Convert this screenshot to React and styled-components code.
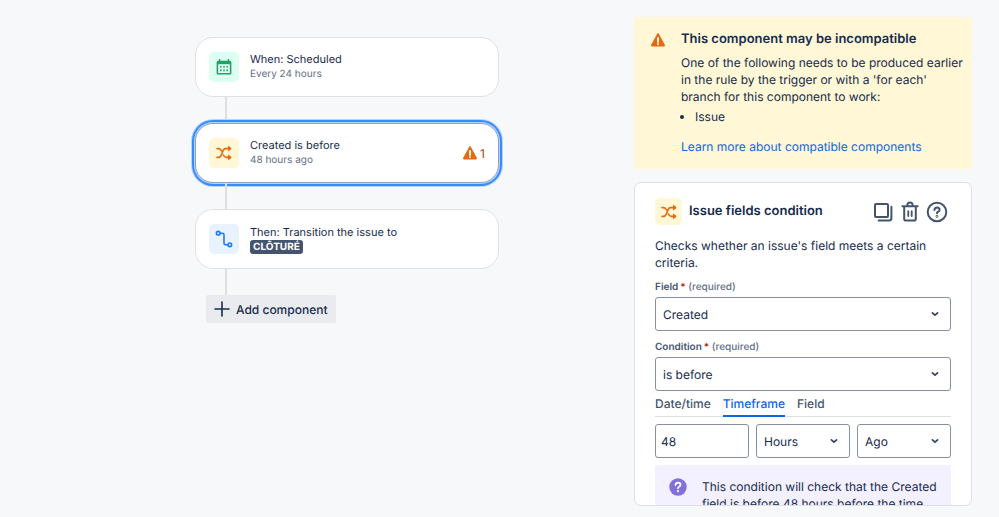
import { useState } from "react";
import styled, { createGlobalStyle, css } from "styled-components";

const GlobalStyle = createGlobalStyle`
  *, *::before, *::after {
    box-sizing: border-box;
  }

  body {
    margin: 0;
    background: #f7f8fa;
    color: #172b4d;
    font-family: Inter, "Liberation Sans", sans-serif;
    font-size: 12px;
    line-height: 17px;
    text-rendering: geometricPrecision;
  }

  button, input, select {
    font: inherit;
    color: inherit;
    text-rendering: inherit;
  }
`;

const CalendarIcon = () => (
  <svg width="18" height="18" viewBox="0 0 18 18" fill="none" aria-hidden="true">
    <rect x="1.6" y="2.8" width="14.8" height="13.8" rx="1.6" fill="#22a06b" />
    <path d="M4.6 1.8v3M13.4 1.8v3" stroke="#22a06b" strokeWidth="1.6" strokeLinecap="round" />
    <rect x="3.2" y="6.2" width="11.6" height="8.8" fill="#dcfff1" />
    <path
      d="M5 8.8h1.6M8.2 8.8h1.6M11.4 8.8h1.6M5 12.4h1.6M8.2 12.4h1.6M11.4 12.4h1.6"
      stroke="#22a06b"
      strokeWidth="1.6"
    />
  </svg>
);

const ShuffleIcon = () => (
  <svg
    width="18"
    height="18"
    viewBox="0 0 18 18"
    fill="none"
    stroke="#e56910"
    strokeWidth="1.6"
    strokeLinecap="round"
    strokeLinejoin="round"
    aria-hidden="true"
  >
    <path d="M2 4.6h1.6c1.8 0 2.4 1.2 3 2.4M2 13.4h1.6c4.4 0 2.6-8.8 7-8.8h4.6M8.4 11c.6 1.2 1.2 2.4 2.8 2.4h4" />
    <path d="M13.8 2.6l2.4 2-2.4 2zM13.8 11.4l2.4 2-2.4 2z" fill="#e56910" strokeWidth="1" />
  </svg>
);

const TransitionIcon = () => (
  <svg width="18" height="18" viewBox="0 0 18 18" fill="none" stroke="#1d7afc" strokeWidth="1.6" aria-hidden="true">
    <circle cx="3.2" cy="3.2" r="1.8" />
    <circle cx="14.8" cy="14.8" r="1.8" />
    <path d="M5 3.2h2.4Q9 3.2 9 4.8v8.4q0 1.6 1.6 1.6H13" />
  </svg>
);

const WarningIcon = () => (
  <svg width="16" height="16" viewBox="0 0 16 16" aria-hidden="true">
    <path d="M7.2 1.7q.8-1.2 1.6 0l6.1 11.4q.5 1.4-.9 1.4H2q-1.4 0-.9-1.4z" fill="#e56910" />
    <path d="M8 6v4" stroke="#fff" strokeWidth="1.8" strokeLinecap="round" />
    <circle cx="8" cy="12.3" r="1" fill="#fff" />
  </svg>
);

const PlusIcon = () => (
  <svg width="16" height="16" viewBox="0 0 16 16" fill="none" aria-hidden="true">
    <path d="M8 1v14M1 8h14" stroke="#172b4d" strokeWidth="1.6" strokeLinecap="round" />
  </svg>
);

const CopyIcon = () => (
  <svg width="20" height="20" viewBox="0 0 20 20" fill="none" stroke="#44546f" strokeWidth="2" aria-hidden="true">
    <rect x="2" y="2" width="13" height="13" rx="1" />
    <path d="M18.4 4.8v11.8q0 1.8-1.8 1.8H5.6" strokeLinecap="round" />
  </svg>
);

const TrashIcon = () => (
  <svg
    width="20"
    height="22"
    viewBox="0 0 20 22"
    fill="none"
    stroke="#44546f"
    strokeWidth="2"
    strokeLinecap="round"
    aria-hidden="true"
  >
    <path d="M2.4 5.2h15.2M7.4 4.6V4q0-2.6 2.6-2.6T12.6 4v.6" />
    <path d="M4.2 6.2v11.6q0 1.8 1.6 1.8h8.4q1.6 0 1.6-1.8V6.2" />
    <path d="M8.3 10.2v4.8M11.7 10.2v4.8" strokeWidth="1.8" />
  </svg>
);

const HelpIcon = () => (
  <svg
    width="22"
    height="22"
    viewBox="0 0 22 22"
    fill="none"
    stroke="#44546f"
    strokeWidth="2"
    strokeLinecap="round"
    aria-hidden="true"
  >
    <circle cx="11" cy="11" r="9.3" />
    <path d="M8.4 9q.2-2.6 2.6-2.6 2.6.1 2.6 2.3 0 1.4-1.5 2-1.1.5-1.1 1.6" />
    <circle cx="11" cy="15.4" r=".4" />
  </svg>
);

const HelpFilledIcon = () => (
  <svg width="18" height="18" viewBox="0 0 18 18" fill="none" strokeLinecap="round" aria-hidden="true">
    <circle cx="9" cy="9" r="8.7" fill="#8270db" />
    <path
      d="M6.5 7q.2-2.4 2.5-2.4 2.5.1 2.5 2.2 0 1.2-1.4 1.9-1.1.5-1.1 1.6"
      stroke="#fff"
      strokeWidth="1.8"
    />
    <circle cx="9" cy="13.2" r="1.1" fill="#fff" />
  </svg>
);

const ChevronIcon = () => (
  <svg width="8" height="6" viewBox="0 0 8 6" fill="none" aria-hidden="true">
    <path
      d="M1.4 1.8L4 4.2l2.6-2.4"
      stroke="#344563"
      strokeWidth="1.7"
      strokeLinecap="round"
      strokeLinejoin="round"
    />
  </svg>
);

const steps = [
  { id: "trigger", title: "When: Scheduled", detail: "Every 24 hours", tint: "#dcfff1", Icon: CalendarIcon },
  {
    id: "condition",
    title: "Created is before",
    detail: "48 hours ago",
    tint: "#fff7d6",
    Icon: ShuffleIcon,
    warnings: 1,
  },
  { id: "action", title: "Then: Transition the issue to", status: "CLÔTURÉ", tint: "#e9f2ff", Icon: TransitionIcon },
];

const tabs = ["Date/time", "Timeframe", "Field"];

function Dropdown({ id, label, options }) {
  return (
    <SelectBox>
      <Select id={id} aria-label={label}>
        {options.map((option) => (
          <option key={option}>{option}</option>
        ))}
      </Select>
      <SelectArrow>
        <ChevronIcon />
      </SelectArrow>
    </SelectBox>
  );
}

export default function App() {
  const [selected, setSelected] = useState("condition");
  const [tab, setTab] = useState("Timeframe");

  return (
    <Page>
      <GlobalStyle />
      <Canvas>
        <Flow>
          {steps.map(({ id, title, detail, status, tint, Icon, warnings }) => (
            <Step key={id}>
              <StepCard type="button" $selected={selected === id} onClick={() => setSelected(id)}>
                <IconTile $tint={tint} $size={30}>
                  <Icon />
                </IconTile>
                <StepText>
                  <span>{title}</span>
                  {detail && <Detail>{detail}</Detail>}
                  {status && <Status>{status}</Status>}
                </StepText>
                {warnings && (
                  <Warnings>
                    <WarningIcon />
                    {warnings}
                  </Warnings>
                )}
              </StepCard>
              <Connector />
            </Step>
          ))}
          <AddButton type="button">
            <PlusIcon />
            Add component
          </AddButton>
        </Flow>
      </Canvas>

      <Sidebar>
        <Notice>
          <WarningIcon />
          <div>
            <NoticeTitle>This component may be incompatible</NoticeTitle>
            <Text>
              One of the following needs to be produced earlier in the rule by the trigger or with a 'for each' branch
              for this component to work:
            </Text>
            <List>
              <li>Issue</li>
            </List>
            <Link href="#compatible">Learn more about compatible components</Link>
          </div>
        </Notice>

        <Panel>
          <PanelHeader>
            <IconTile $tint="#fff7d6" $size={27}>
              <ShuffleIcon />
            </IconTile>
            <PanelTitle>Issue fields condition</PanelTitle>
            <Actions>
              <IconButton type="button" aria-label="Duplicate">
                <CopyIcon />
              </IconButton>
              <IconButton type="button" aria-label="Delete">
                <TrashIcon />
              </IconButton>
              <IconButton type="button" aria-label="Help">
                <HelpIcon />
              </IconButton>
            </Actions>
          </PanelHeader>
          <Text>Checks whether an issue's field meets a certain criteria.</Text>

          <Label htmlFor="field">
            Field<Required>*</Required> <Hint>(required)</Hint>
          </Label>
          <Dropdown id="field" options={["Created", "Updated", "Due date"]} />

          <Label htmlFor="condition">
            Condition<Required>*</Required> <Hint>(required)</Hint>
          </Label>
          <Dropdown id="condition" options={["is before", "is after"]} />

          <Tabs role="tablist">
            {tabs.map((name) => (
              <Tab
                key={name}
                type="button"
                role="tab"
                aria-selected={tab === name}
                $active={tab === name}
                onClick={() => setTab(name)}
              >
                {name}
              </Tab>
            ))}
          </Tabs>

          <Timeframe>
            <NumberInput aria-label="Amount" defaultValue="48" />
            <Dropdown label="Unit" options={["Hours", "Days", "Weeks"]} />
            <Dropdown label="Direction" options={["Ago", "From now"]} />
          </Timeframe>

          <Info>
            <HelpFilledIcon />
            <Text>This condition will check that the Created field is before 48 hours before the time</Text>
          </Info>
        </Panel>
      </Sidebar>
    </Page>
  );
}

const Page = styled.main`
  display: flex;
  height: 100vh;
  overflow: hidden;
`;

const Canvas = styled.section`
  flex: 1;
  display: flex;
  justify-content: center;
  padding: 37px 0 0 60px;
`;

const Flow = styled.div`
  width: 304px;
`;

const Step = styled.div`
  display: flex;
  flex-direction: column;
`;

const StepCard = styled.button`
  display: flex;
  align-items: center;
  gap: 11px;
  height: 60px;
  padding: 0 13px;
  border: 1px solid #dfe1e7;
  border-radius: 18px;
  background: #fff;
  text-align: left;
  cursor: pointer;

  ${({ $selected }) =>
    $selected &&
    css`
      border-color: #8c9fc4;
      box-shadow: 0 0 0 1px #b3d2ff, 0 0 0 3px #388bff, 0 0 0 4px #b8d5fd;
    `}
`;

const IconTile = styled.span`
  display: flex;
  flex: none;
  align-items: center;
  justify-content: center;
  width: ${({ $size }) => $size}px;
  height: ${({ $size }) => $size}px;
  border-radius: 5px;
  background: ${({ $tint }) => $tint};
`;

const StepText = styled.span`
  display: flex;
  flex: 1;
  flex-direction: column;
  align-items: flex-start;
  font-size: 11px;
  line-height: 15px;
`;

const Detail = styled.span`
  color: #626f86;
  font-size: 10px;
`;

const Status = styled.span`
  padding: 0 3px;
  border-radius: 3px;
  background: #44546f;
  color: #fff;
  font-size: 10px;
  font-weight: 700;
  line-height: 14px;
`;

const Warnings = styled.span`
  display: flex;
  align-items: center;
  gap: 2px;
  color: #a54800;
`;

const Connector = styled.span`
  width: 2px;
  height: 26px;
  margin-left: 30px;
  background: #dcdfe4;
`;

const AddButton = styled.button`
  display: flex;
  align-items: center;
  gap: 6px;
  height: 28px;
  margin-left: 11px;
  padding: 0 8px;
  border: 0;
  border-radius: 2px;
  background: #e9ebee;
  font-weight: 500;
  cursor: pointer;
`;

const Sidebar = styled.aside`
  display: flex;
  flex-direction: column;
  gap: 13px;
  width: 338px;
  margin: 17px 27px 11px 0;
`;

const Notice = styled.section`
  display: flex;
  flex: none;
  gap: 15px;
  padding: 14px 8px 14px 16px;
  border-radius: 2px;
  background: #fff7d6;

  svg {
    flex: none;
    margin-top: 1px;
  }
`;

const NoticeTitle = styled.h2`
  margin: 0 0 6px;
  font-size: 13px;
  font-weight: 600;
  line-height: 17px;
`;

const Text = styled.p`
  margin: 0;
`;

const List = styled.ul`
  margin: 3px 0 13px;
  padding-left: 14px;
`;

const Link = styled.a`
  color: #0c66e4;
  text-decoration: none;
`;

const Panel = styled.section`
  flex: 1;
  min-height: 0;
  overflow: hidden;
  padding: 15px 20px 0;
  border: 1px solid #dfe1e7;
  border-radius: 7px;
  background: #fff;
`;

const PanelHeader = styled.header`
  display: flex;
  align-items: center;
  gap: 7px;
  margin-bottom: 12px;
`;

const PanelTitle = styled.h2`
  flex: 1;
  margin: 0;
  font-size: 13px;
  font-weight: 600;
`;

const Actions = styled.div`
  display: flex;
  gap: 5px;
  padding-right: 3px;
`;

const IconButton = styled.button`
  display: flex;
  align-items: center;
  justify-content: center;
  width: 22px;
  height: 22px;
  padding: 0;
  border: 0;
  background: none;
  cursor: pointer;
`;

const Label = styled.label`
  display: block;
  margin: 9px 0 3px;
  color: #44546f;
  font-size: 10px;
  font-weight: 600;
  line-height: 14px;
`;

const Required = styled.span`
  padding-left: 2px;
  color: #ae2a19;
`;

const Hint = styled.span`
  color: #626f86;
  font-weight: 500;
`;

const SelectBox = styled.div`
  display: grid;
  align-items: center;
`;

const field = css`
  width: 100%;
  min-width: 0;
  height: 34px;
  border: 1px solid #8590a2;
  border-radius: 3px;
  background: #fff;
`;

const Select = styled.select`
  ${field}
  grid-area: 1 / 1;
  appearance: none;
  padding: 0 24px 0 7px;
`;

const SelectArrow = styled.span`
  display: flex;
  grid-area: 1 / 1;
  justify-self: end;
  padding-right: 12px;
  pointer-events: none;
`;

const Tabs = styled.div`
  display: flex;
  gap: 12px;
  margin: 3px 0 7px;
  box-shadow: inset 0 -1px #dcdfe4;
`;

const Tab = styled.button`
  padding: 1px 0 3px;
  border: 0;
  border-bottom: 2px solid ${({ $active }) => ($active ? "#0c66e4" : "transparent")};
  background: none;
  color: ${({ $active }) => ($active ? "#0c66e4" : "#44546f")};
  font-weight: 500;
  cursor: pointer;
`;

const Timeframe = styled.div`
  display: grid;
  grid-template-columns: repeat(3, 1fr);
  gap: 7px;
`;

const NumberInput = styled.input`
  ${field}
  padding: 0 5px;
`;

const Info = styled.div`
  display: flex;
  gap: 15px;
  margin-top: 7px;
  padding: 13px 8px 13px 14px;
  border-radius: 2px;
  background: #f3f0ff;

  svg {
    flex: none;
  }
`;
